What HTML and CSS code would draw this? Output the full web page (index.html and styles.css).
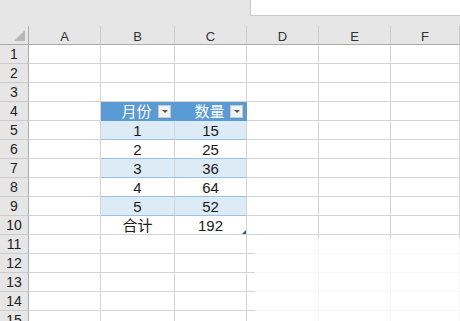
FILE: index.html
```html
<!DOCTYPE html>
<html lang="zh">
<head>
  <meta charset="UTF-8">
  <meta name="viewport" content="width=device-width, initial-scale=1.0">
  <title>月份 数量</title>
  <link rel="stylesheet" href="styles.css">
</head>
<body>
  <div class="topbar">
    <div class="namebox"></div>
  </div>

  <div class="sheet">
    <div class="corner"><span class="tri"></span></div>
    <div class="colhead">A</div>
    <div class="colhead">B</div>
    <div class="colhead">C</div>
    <div class="colhead">D</div>
    <div class="colhead">E</div>
    <div class="colhead">F</div>

    <div class="rowhead">1</div><div class="cell"></div><div class="cell"></div><div class="cell"></div><div class="cell"></div><div class="cell"></div><div class="cell"></div>
    <div class="rowhead">2</div><div class="cell"></div><div class="cell"></div><div class="cell"></div><div class="cell"></div><div class="cell"></div><div class="cell"></div>
    <div class="rowhead">3</div><div class="cell"></div><div class="cell"></div><div class="cell"></div><div class="cell"></div><div class="cell"></div><div class="cell"></div>

    <div class="rowhead">4</div><div class="cell"></div>
    <div class="cell tb-head">月份<span class="filter"></span></div>
    <div class="cell tb-head">数量<span class="filter"></span></div>
    <div class="cell"></div><div class="cell"></div><div class="cell"></div>

    <div class="rowhead">5</div><div class="cell"></div><div class="cell tb band">1</div><div class="cell tb band">15</div><div class="cell"></div><div class="cell"></div><div class="cell"></div>
    <div class="rowhead">6</div><div class="cell"></div><div class="cell tb">2</div><div class="cell tb">25</div><div class="cell"></div><div class="cell"></div><div class="cell"></div>
    <div class="rowhead">7</div><div class="cell"></div><div class="cell tb band">3</div><div class="cell tb band">36</div><div class="cell"></div><div class="cell"></div><div class="cell"></div>
    <div class="rowhead">8</div><div class="cell"></div><div class="cell tb">4</div><div class="cell tb">64</div><div class="cell"></div><div class="cell"></div><div class="cell"></div>
    <div class="rowhead">9</div><div class="cell"></div><div class="cell tb band">5</div><div class="cell tb band">52</div><div class="cell"></div><div class="cell"></div><div class="cell"></div>
    <div class="rowhead">10</div><div class="cell"></div><div class="cell tb total">合计</div><div class="cell tb total">192<span class="handle"></span></div><div class="cell"></div><div class="cell"></div><div class="cell"></div>

    <div class="rowhead">11</div><div class="cell"></div><div class="cell"></div><div class="cell"></div><div class="cell"></div><div class="cell"></div><div class="cell"></div>
    <div class="rowhead">12</div><div class="cell"></div><div class="cell"></div><div class="cell"></div><div class="cell"></div><div class="cell"></div><div class="cell"></div>
    <div class="rowhead">13</div><div class="cell"></div><div class="cell"></div><div class="cell"></div><div class="cell"></div><div class="cell"></div><div class="cell"></div>
    <div class="rowhead">14</div><div class="cell"></div><div class="cell"></div><div class="cell"></div><div class="cell"></div><div class="cell"></div><div class="cell"></div>
    <div class="rowhead">15</div><div class="cell"></div><div class="cell"></div><div class="cell"></div><div class="cell"></div><div class="cell"></div><div class="cell"></div>

    <div class="smudge"></div>
  </div>
</body>
</html>
```

FILE: styles.css
```css
html, body {
  margin: 0;
  width: 460px;
  height: 321px;
  overflow: hidden;
  background: #ffffff;
  font-family: "Liberation Sans", "Noto Sans CJK SC", sans-serif;
  color: #1a1a1a;
}

.topbar {
  height: 26px;
  background-color: #e6e6e6;
  display: flex;
  justify-content: flex-end;
  align-items: flex-start;
}

.namebox {
  width: 209px;
  height: 15px;
  background-color: #ffffff;
  border-left: 1px solid #c8c8c8;
  border-bottom: 1px solid #c8c8c8;
}

.sheet {
  position: relative;
  display: grid;
  grid-template-columns: 29px 72px 74px 72px 72px 72px 1fr;
  grid-template-rows: 19px;
  grid-auto-rows: 19px;
}

.corner,
.colhead {
  background-color: #e6e6e6;
  border-bottom: 1px solid #ababab;
  box-sizing: border-box;
  position: relative;
}

.corner {
  border-right: 1px solid #ababab;
}

.tri {
  position: absolute;
  right: 3px;
  bottom: 3px;
  width: 0;
  height: 0;
  border-left: 11px solid transparent;
  border-bottom: 11px solid #b7b7b7;
}

.colhead {
  border-right: 1px solid #cbcbcb;
  font-size: 13px;
  color: #333;
  text-align: center;
  line-height: 22px;
}

.rowhead {
  background-color: #e6e6e6;
  border-right: 1px solid #ababab;
  border-bottom: 1px solid #cbcbcb;
  box-sizing: border-box;
  font-size: 14px;
  color: #222;
  text-align: center;
  line-height: 19px;
}

.cell {
  border-right: 1px solid #d4d4d4;
  border-bottom: 1px solid #d4d4d4;
  box-sizing: border-box;
  font-size: 15px;
  text-align: center;
  line-height: 19px;
  position: relative;
}

.tb {
  border-bottom-color: #9bc2e6;
}

.tb-head {
  background-color: #5b9bd5;
  border-right-color: #5b9bd5;
  border-bottom-color: #5b9bd5;
  color: #ffffff;
  padding-right: 2px;
}

.band {
  background-color: #ddebf7;
}

.total {
  border-bottom-color: #d4d4d4;
}

.filter {
  position: absolute;
  right: 3px;
  top: 3px;
  width: 13px;
  height: 13px;
  box-sizing: border-box;
  background-color: #f2f2f2;
  border: 1px solid #c9c9c9;
}

.filter::after {
  content: "";
  position: absolute;
  left: 3px;
  top: 4px;
  border-left: 3px solid transparent;
  border-right: 3px solid transparent;
  border-top: 3px solid #555;
}

.handle {
  position: absolute;
  right: 0;
  bottom: 0;
  width: 0;
  height: 0;
  border-left: 4px solid transparent;
  border-bottom: 4px solid #2f5597;
}

.smudge {
  position: absolute;
  left: 255px;
  top: 212px;
  right: 0;
  bottom: 0;
  background: rgba(255, 255, 255, 0.8);
}
```
